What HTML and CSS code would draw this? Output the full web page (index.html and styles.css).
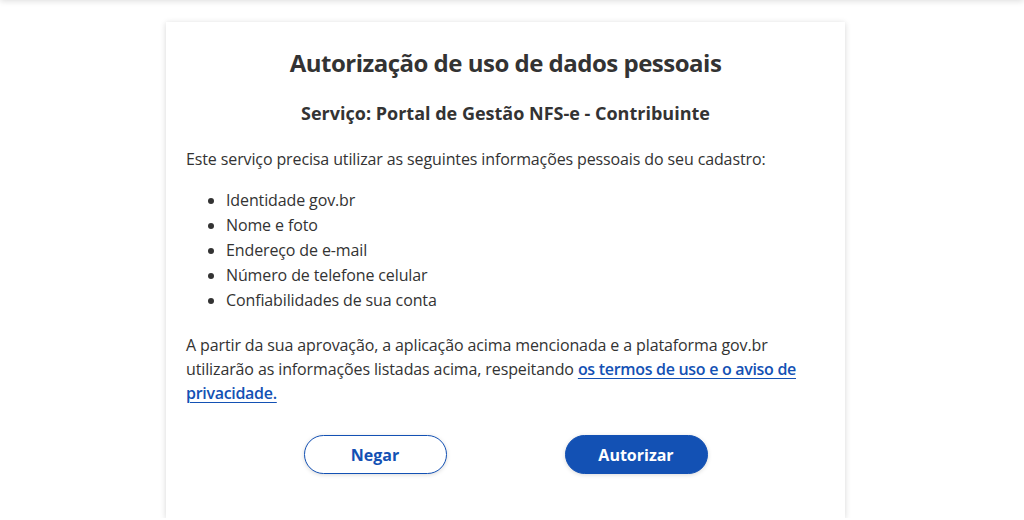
FILE: index.html
```html
<!DOCTYPE html>
<html lang="pt-BR">
<head>
<meta charset="utf-8">
<title>Autorização de uso de dados pessoais</title>
<link rel="stylesheet" href="styles.css">
</head>
<body>
<div class="topbar"></div>
<main class="card">
  <h1 class="title">Autorização de uso de dados pessoais</h1>
  <h2 class="subtitle">Serviço: Portal de Gestão NFS-e - Contribuinte</h2>
  <p class="intro">Este serviço precisa utilizar as seguintes informações pessoais do seu cadastro:</p>
  <ul class="scopes">
    <li>Identidade gov.br</li>
    <li>Nome e foto</li>
    <li>Endereço de e-mail</li>
    <li>Número de telefone celular</li>
    <li>Confiabilidades de sua conta</li>
  </ul>
  <p class="terms">A partir da sua aprovação, a aplicação acima mencionada e a plataforma gov.br utilizarão as informações listadas acima, respeitando <a class="link" href="#">os termos de uso e o aviso de privacidade.</a></p>
  <div class="actions">
    <button class="btn btn-secondary" type="button">Negar</button>
    <button class="btn btn-primary" type="button">Autorizar</button>
  </div>
</main>
</body>
</html>
```
FILE: styles.css
```css
html, body {
  margin: 0;
  padding: 0;
  background: #ffffff;
}

body {
  padding-right: 13px;
  font-family: "Open Sans", sans-serif;
  color: #333333;
  overflow: hidden;
}

.topbar {
  height: 10px;
  margin: -10px -13px 0 0;
  box-shadow: 0 1px 6px rgba(0, 0, 0, 0.14);
}

.card {
  box-sizing: border-box;
  width: 679px;
  min-height: 496px;
  margin: 22px auto 0;
  padding: 26px 20px 20px;
  background: #fff;
  box-shadow: 0 1px 6px rgba(0, 0, 0, 0.16);
}

.title {
  margin: 0;
  font-size: 24px;
  line-height: 30px;
  font-weight: 700;
  letter-spacing: -0.5px;
  text-align: center;
}

.subtitle {
  margin: 23px 0 0;
  font-size: 18px;
  line-height: 24px;
  font-weight: 700;
  text-align: center;
}

.intro {
  margin: 22px 0 0;
  font-size: 16px;
  line-height: 24px;
  letter-spacing: -0.12px;
}

.scopes {
  margin: 17px 0 0;
  padding-left: 40px;
  font-size: 16px;
  line-height: 25px;
  letter-spacing: -0.12px;
}

.terms {
  margin: 20px 0 0;
  font-size: 16px;
  line-height: 24px;
  letter-spacing: -0.12px;
}

.link {
  color: #1351b4;
  font-weight: 600;
  letter-spacing: -0.3px;
  text-decoration: underline;
  text-decoration-thickness: 1px;
  text-underline-offset: 3px;
}

.actions {
  display: flex;
  justify-content: center;
  gap: 118px;
  margin-top: 30px;
}

.btn {
  width: 143px;
  height: 39px;
  border-radius: 20px;
  font-family: "Open Sans", sans-serif;
  font-size: 16px;
  font-weight: 700;
  cursor: pointer;
  box-shadow: 0 1px 4px rgba(0, 0, 0, 0.15);
}

.btn-secondary {
  background: #fff;
  color: #1351b4;
  border: 1px solid #1351b4;
}

.btn-primary {
  background: #1351b4;
  color: #fff;
  border: 1px solid #1351b4;
}
```
